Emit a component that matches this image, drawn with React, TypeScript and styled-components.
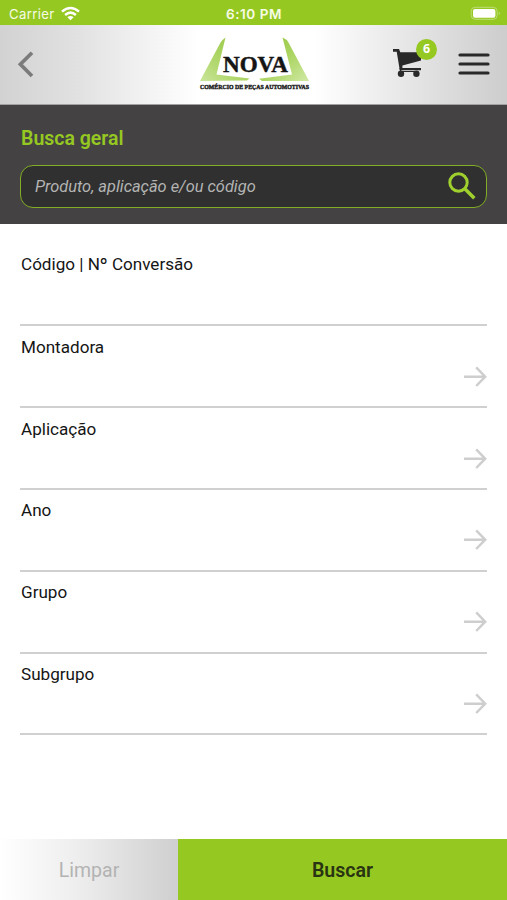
import React from "react";
import styled, { createGlobalStyle } from "styled-components";

const green = "#96c822";

const GlobalStyle = createGlobalStyle`
  * { box-sizing: border-box; }
  body { margin: 0; background: #fff; font-family: Roboto, "Liberation Sans", sans-serif; }
  button, input { font: inherit; }
`;

const Screen = styled.div`
  display: flex;
  flex-direction: column;
  width: 507px;
  height: 900px;
  overflow: hidden;
  background: #fff;
`;

const StatusBar = styled.div`
  display: grid;
  grid-template-columns: 1fr auto 1fr;
  align-items: center;
  flex: none;
  height: 25px;
  padding: 2px 6px 0 9px;
  background: ${green};
  color: #f6fbe6;
  font: 400 13.2px/20px Inter, sans-serif;
`;

const Carrier = styled.div`
  display: flex;
  align-items: center;
  gap: 6px;
  letter-spacing: 0.35px;
`;

const Clock = styled.div`
  font-weight: 600;
  font-size: 13.6px;
  letter-spacing: 0.5px;
  margin-right: 2px;
`;

const Battery = styled.svg`
  justify-self: end;
  display: block;
`;

const Header = styled.header`
  display: flex;
  align-items: center;
  flex: none;
  height: 80px;
  padding: 0 17px;
  border-bottom: 1px solid #a2a2a2;
  background: linear-gradient(90deg, #d2d2d2 0, #e0e0e0 14%, #fff 39%, #fff 62%, #e4e4e4 82%, #cdcdcd 100%);
`;

const IconButton = styled.button`
  display: flex;
  padding: 0;
  border: 0;
  background: none;
  svg { display: block; }
`;

const Logo = styled.svg`
  display: block;
  margin-left: 164px;
`;

const CartButton = styled(IconButton)`
  position: relative;
  margin: -3px 0 0 82px;
`;

const Badge = styled.span`
  position: absolute;
  left: 23px;
  top: -10px;
  width: 21px;
  height: 21px;
  border-radius: 50%;
  background: ${green};
  color: #fff;
  font: 700 12.5px/20px "Open Sans", sans-serif;
  text-align: center;
`;

const MenuButton = styled(IconButton)`
  margin: -2px 0 0 auto;
`;

const SearchPanel = styled.section`
  flex: none;
  height: 119px;
  padding: 21px 20px 0;
  background: #444243;
`;

const SearchTitle = styled.h1`
  margin: 0 0 14px 1px;
  color: ${green};
  font-size: 19.5px;
  line-height: 25px;
  font-weight: 600;
`;

const SearchBox = styled.div`
  display: flex;
  align-items: center;
  justify-content: space-between;
  height: 43px;
  padding: 0 10px 2px 14px;
  border: 1.5px solid #82ad25;
  border-radius: 13px;
  background: #2f302f;
`;

const SearchInput = styled.input`
  width: 300px;
  padding: 2px 0 0;
  border: 0;
  outline: 0;
  background: none;
  color: #b9b9b9;
  font-size: 16.4px;
  font-style: italic;
  &::placeholder { color: #b4b4b4; opacity: 1; }
`;

const Fields = styled.main`
  flex: 1;
  padding: 20px 20px 0;
`;

const Field = styled.div<{ $tall?: boolean }>`
  display: flex;
  flex-direction: column;
  height: ${(p) => (p.$tall ? 82.2 : 81.85)}px;
  padding: ${(p) => (p.$tall ? 9 : 9.6)}px 0 0 1px;
  border-bottom: 2px solid #d0d0d0;
  color: #151515;
  font-size: 17.1px;
  line-height: 22px;
`;

const FieldArrow = styled.svg`
  display: block;
  align-self: flex-end;
  margin-top: 8px;
`;

const Footer = styled.footer`
  display: grid;
  grid-template-columns: 178px 1fr;
  flex: none;
  height: 61px;
`;

const Action = styled.button<{ $primary?: boolean }>`
  padding: 1px 0 0;
  border: 0;
  background: ${(p) => (p.$primary ? green : "linear-gradient(90deg, #fff 0, #ededed 45%, #cfcfcf 100%)")};
  color: ${(p) => (p.$primary ? "#293413" : "#b3b3b3")};
  font-size: ${(p) => (p.$primary ? 19.6 : 19.5)}px;
  font-weight: ${(p) => (p.$primary ? 600 : 400)};
`;

const fields = ["Montadora", "Aplicação", "Ano", "Grupo", "Subgrupo"];

export default function App() {
  return (
    <Screen>
      <GlobalStyle />
      <StatusBar>
        <Carrier>
          Carrier
          <svg width="19" height="15" viewBox="0 0 19 15" fill="none" stroke="#fff" strokeWidth="2.5">
            <path d="M1 5.6Q9.5-1.7 18 5.6" />
            <path d="M4.1 9Q9.5 4.2 14.9 9" />
            <path d="M6.4 11.2Q9.5 8.7 12.6 11.2L9.5 14.2Z" fill="#fff" stroke="none" />
          </svg>
        </Carrier>
        <Clock>6:10 PM</Clock>
        <Battery width="31" height="15" viewBox="0 0 31 15">
          <rect x="1.2" y="1.3" width="26" height="12" rx="4" fill="none" stroke="#bddc78" />
          <rect x="3" y="3" width="22.4" height="8.7" rx="2" fill="#fff" />
          <path d="M28.8 5.5Q31 7.3 28.8 9Z" fill="#bddc78" />
        </Battery>
      </StatusBar>
      <Header>
        <IconButton aria-label="Voltar">
          <svg width="18" height="28" viewBox="0 0 18 28" fill="none" stroke="#7b7b7b" strokeWidth="3.7">
            <path d="M15 1.8L3.4 13.3L15 25" />
          </svg>
        </IconButton>
        <Logo width="112" height="56" viewBox="0 0 112 56">
          <defs>
            <linearGradient id="leafLeft" x1="0" y1="1" x2="1" y2="0">
              <stop offset="0" stopColor="#cbe59b" />
              <stop offset="0.3" stopColor="#b5da75" />
              <stop offset="1" stopColor="#91c536" />
            </linearGradient>
            <linearGradient id="leafRight" x1="0" y1="0" x2="1" y2="1">
              <stop offset="0" stopColor="#8fc334" />
              <stop offset="0.6" stopColor="#b1d86c" />
              <stop offset="1" stopColor="#d1e9a6" />
            </linearGradient>
          </defs>
          <path d="M26.5 .5L17.5 37.5L50.5 41.5L48 43.5L1 44L21.5 5.5Q23 3 26.5 .5Z" fill="url(#leafLeft)" />
          <path d="M83.5 .5L93 37.5L60 41.7L63 44H110L89.5 5.5Q87.5 2 83.5 .5Z" fill="url(#leafRight)" />
          <text x="24" y="34.5" textLength="65" lengthAdjust="spacingAndGlyphs" fontFamily="Liberation Serif, serif" fontWeight="700" fontSize="22.5" fill="#151515" stroke="#151515" strokeWidth=".45">NOVA</text>
          <text x="1" y="52.2" textLength="109" lengthAdjust="spacingAndGlyphs" fontFamily="Liberation Serif, serif" fontWeight="700" fontSize="6" fill="#1d1d1d" stroke="#1d1d1d" strokeWidth=".4">COMÉRCIO DE PEÇAS AUTOMOTIVAS</text>
        </Logo>
        <CartButton aria-label="Carrinho">
          <svg width="29" height="29" viewBox="0 0 29 29">
            <path d="M0 0H6L7.3 3.2H28V11.5L9.4 16.6V19H28V21.2H6.8L3.7 2.8H0Z" fill="#292929" />
            <path d="M7 19L8 24M6 22.5H25" stroke="#292929" strokeWidth="1.2" />
            <circle cx="8" cy="24.8" r="3.2" fill="#292929" />
            <circle cx="23.4" cy="24.8" r="3.2" fill="#292929" />
          </svg>
          <Badge>6</Badge>
        </CartButton>
        <MenuButton aria-label="Menu">
          <svg width="32" height="24" viewBox="0 0 32 24" stroke="#292929" strokeWidth="3.2" strokeLinecap="round">
            <path d="M2 3H30M2 12H30M2 21H30" />
          </svg>
        </MenuButton>
      </Header>
      <SearchPanel>
        <SearchTitle>Busca geral</SearchTitle>
        <SearchBox>
          <SearchInput placeholder="Produto, aplicação e/ou código" />
          <IconButton aria-label="Pesquisar">
            <svg width="28" height="28" viewBox="0 0 28 28" fill="none" stroke="#9fd02e" strokeWidth="3">
              <circle cx="10.5" cy="10.5" r="8.7" />
              <path d="M16.8 16.8L26.3 26.3" strokeWidth="3.5" />
            </svg>
          </IconButton>
        </SearchBox>
      </SearchPanel>
      <Fields>
        <Field $tall>Código | Nº Conversão</Field>
        {fields.map((label) => (
          <Field key={label}>
            {label}
            <FieldArrow width="24" height="22" viewBox="0 0 24 22" fill="none" stroke="#cecece" strokeWidth="2.5">
              <path d="M1 10.7H22M13.2 1.4L22.2 10.7L13.2 20" />
            </FieldArrow>
          </Field>
        ))}
      </Fields>
      <Footer>
        <Action>Limpar</Action>
        <Action $primary>Buscar</Action>
      </Footer>
    </Screen>
  );
}
